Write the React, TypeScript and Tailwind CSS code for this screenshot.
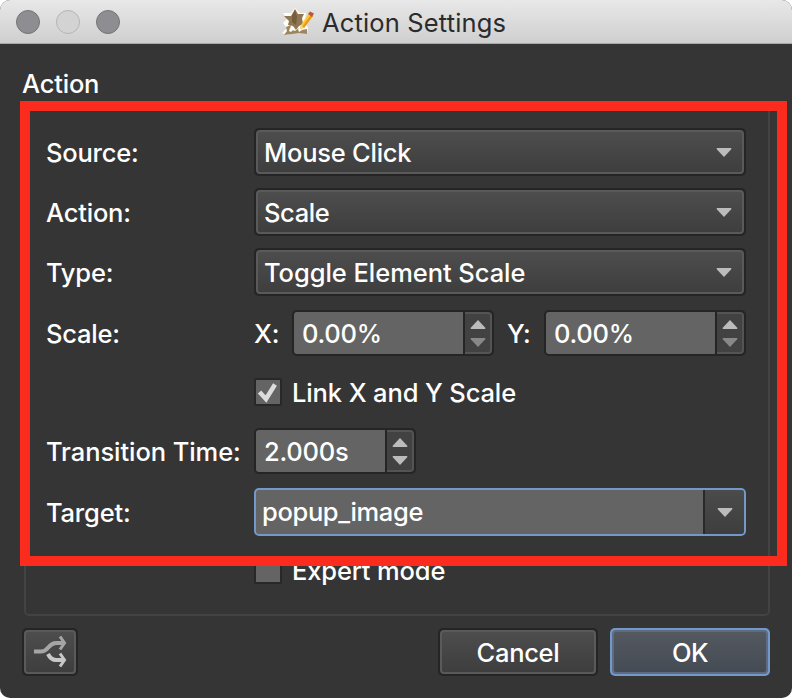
import type { ReactNode } from "react";
import clsx from "clsx";

const selects = [
    { label: "Source:", value: "Mouse Click", tracking: "tracking-[-0.25px]" },
    { label: "Action:", value: "Scale", tracking: "tracking-[-0.4px]" },
    { label: "Type:", value: "Toggle Element Scale", tracking: "tracking-[-0.05px]" },
];

function Arrow({ up = false, dim = false }: { up?: boolean; dim?: boolean }) {
    return (
        <svg width="16" height="9" viewBox="0 0 16 9" className={dim ? "text-[#888888]" : "text-[#bcbcbc]"}>
            <path d={up ? "M1 9L0.5 8L8 0L15.5 8L15 9Z" : "M1 0L0.5 1L8 9L15.5 1L15 0Z"} fill="currentColor" />
        </svg>
    );
}

function Row({ label, className, children }: { label?: string; className?: string; children: ReactNode }) {
    return (
        <div className={clsx("flex items-center", className)}>
            <span className="w-[208px] shrink-0 pt-0.5 whitespace-nowrap">{label}</span>
            {children}
        </div>
    );
}

function SelectBox({ value, tracking }: { value: string; tracking: string }) {
    return (
        <div className="h-12 w-[492px] rounded-[5px] bg-[#252525] p-0.5">
            <div className="flex h-full items-center justify-between rounded-[4px] border-2 border-[#5a5a5a] bg-linear-to-b from-[#4d4d4d] to-[#3e3e3e] pr-[10px] pl-[6px]">
                <span className={clsx("pt-0.5", tracking)}>{value}</span>
                <Arrow />
            </div>
        </div>
    );
}

function SpinBox({ value, className, downDim = false }: { value: string; className: string; downDim?: boolean }) {
    return (
        <div className={clsx("flex h-[46px] rounded-[5px] bg-[#252525] p-0.5", className)}>
            <div className="flex flex-1 items-center rounded-l-[3px] bg-[#646464] pt-0.5 pl-2 tracking-[-0.25px]">{value}</div>
            <div className="ml-0.5 flex w-[27px] flex-col items-center justify-center gap-[9px] rounded-r-[4px] border-y-2 border-r-2 border-[#545454] bg-[#424242]">
                <Arrow up />
                <Arrow dim={downDim} />
            </div>
        </div>
    );
}

function CheckBox({ checked = false }: { checked?: boolean }) {
    return (
        <div className="size-7 rounded-[2px] border-2 border-[#282828] bg-[#646464]">
            {checked && (
                <svg width="24" height="24" viewBox="0 0 24 24" fill="none">
                    <path d="M3.5 12L10 19L19 4.5" stroke="#dcdcdc" strokeWidth="4.5" />
                </svg>
            )}
        </div>
    );
}

function AppIcon() {
    return (
        <svg width="32" height="28" viewBox="0 0 32 28">
            <path d="M1 5L9 5L13 0L18 5L24 5L23 14L26 20L25 26L15 24L5 27L0 25L5 20L1 15L5 11Z" fill="#fffdf4" />
            <path d="M13 1L16 6L22 6L20 10L21 16L17 18L14 22L11 18L6 17L7 13L2 8L9 8Z" fill="#8f7754" />
            <path d="M13 2L15 9L14 17L10 14L10 8Z" fill="#765d3c" />
            <path d="M4 19L9 17L8 21L13 23L17 20L20 22L25 21L25 26L17 25L10 26L2 27L5 23Z" fill="#9c8662" />
            <path d="M8 20L11 22L9 24L7 23ZM16 21L18 19L20 22L17 24Z" fill="#fffdf4" />
            <path d="M27 5L31 8L22 20L18 21L19 17Z" fill="#ffc936" />
            <path d="M29 6.5L31 8L22 20L20 19Z" fill="#e99b20" />
            <path d="M26 6L28 3.5L32 5.5L30 9Z" fill="#b95447" />
            <path d="M19 17L22 20L18 21Z" fill="#f0d5a0" />
        </svg>
    );
}

function BranchIcon() {
    return (
        <svg width="34" height="32" viewBox="0 0 34 32" fill="none" strokeWidth="4">
            <path d="M15 18C17 22 19 24 23 24H30" stroke="#c8c8c8" />
            <path d="M27 17.5L31.5 24L27 30.5" stroke="#c8c8c8" strokeWidth="3" />
            <path d="M1 15.5H8C16 15.5 15 7 23 7H30" stroke="#a5a5a5" />
            <path d="M27 0.5L31.5 7L27 13.5" stroke="#a5a5a5" strokeWidth="3" />
        </svg>
    );
}

export default function App() {
    return (
        <div className="h-[698px] w-[792px] bg-white">
            <div className="relative flex h-full flex-col overflow-hidden rounded-[10px] bg-[#353535] font-['Inter','Liberation_Sans',sans-serif] text-[25.5px] leading-[30px] font-[450] tracking-[-0.2px] text-white">
                <header className="relative flex h-11 shrink-0 items-center border-b border-[#a8a8a8] bg-linear-to-b from-[#e8e8e8] to-[#cfcfcf] pl-4">
                    <div className="flex gap-4">
                        <span className="size-6 rounded-full border border-[#747477] bg-[#8e8e92]" />
                        <span className="size-6 rounded-full border border-[#b4b4b4] bg-[#d3d3d3]" />
                        <span className="size-6 rounded-full border border-[#747477] bg-[#8e8e92]" />
                    </div>
                    <div className="ml-[162px] flex items-center gap-2 text-[#2b2b2d]">
                        <AppIcon />
                        <h1 className="pt-0.5 font-normal tracking-[0.15px] whitespace-nowrap">Action Settings</h1>
                    </div>
                </header>

                <h2 className="mt-[25px] ml-[22px]">Action</h2>

                <section className="mt-[7px] ml-6 h-[510px] w-[746px] rounded-[5px] border-2 border-[#434343] pt-5 pl-5">
                    <div className="flex flex-col gap-3">
                        {selects.map((item) => (
                            <Row key={item.label} label={item.label}>
                                <SelectBox value={item.value} tracking={item.tracking} />
                            </Row>
                        ))}
                    </div>
                    <Row label="Scale:" className="mt-3.5">
                        <span className="w-[38px] pt-0.5">X:</span>
                        <SpinBox value="0.00%" className="w-[202px]" downDim />
                        <span className="ml-[13px] w-[37px] pt-0.5">Y:</span>
                        <SpinBox value="0.00%" className="w-[202px]" downDim />
                    </Row>
                    <Row className="mt-[22px] h-7">
                        <CheckBox checked />
                        <span className="ml-[10px] pt-0.5 tracking-[-0.12px]">Link X and Y Scale</span>
                    </Row>
                    <Row label="Transition Time:" className="mt-[22px] tracking-[-0.08px]">
                        <SpinBox value="2.000s" className="w-[162px]" />
                    </Row>
                    <Row label="Target:" className="mt-3.5">
                        <div className="flex h-12 w-[492px] overflow-hidden rounded-[5px] border-2 border-[#7398ca] bg-[#646464]">
                            <span className="flex flex-1 items-center pl-[6px] tracking-[-0.35px]">popup_image</span>
                            <div className="flex w-[41px] items-center justify-center border-l-2 border-[#292929] bg-linear-to-b from-[#4b4b4b] to-[#3e3e3e]">
                                <Arrow />
                            </div>
                        </div>
                    </Row>
                    <Row className="mt-5 h-7">
                        <CheckBox />
                        <span className="ml-[10px] pt-0.5 tracking-[-0.15px]">Expert mode</span>
                    </Row>
                </section>

                <footer className="mt-3 flex h-12 pl-[22px]">
                    <button className="w-14 rounded-[5px] bg-[#252525] p-0.5">
                        <span className="flex h-full items-center justify-center rounded-[4px] border-2 border-[#5a5a5a] bg-linear-to-b from-[#4d4d4d] to-[#3e3e3e]">
                            <BranchIcon />
                        </span>
                    </button>
                    <button className="ml-[360px] w-40 rounded-[5px] bg-[#252525] p-0.5">
                        <span className="flex h-full items-center justify-center rounded-[4px] border-2 border-[#5a5a5a] bg-linear-to-b from-[#4d4d4d] to-[#3e3e3e] pt-0.5 tracking-[-0.3px]">
                            Cancel
                        </span>
                    </button>
                    <button className="ml-3 w-40 rounded-[5px] bg-[#7398ca] p-0.5">
                        <span className="flex h-full items-center justify-center rounded-[4px] border-2 border-[#5d6c82] bg-linear-to-b from-[#545960] to-[#454b54] pt-0.5 tracking-[-0.5px]">
                            OK
                        </span>
                    </button>
                </footer>

                {/* highlight frame around the settings */}
                <div className="absolute top-[101px] left-5 h-[465px] w-[767px] border-10 border-[#fb2c1d]" />
            </div>
        </div>
    );
}
